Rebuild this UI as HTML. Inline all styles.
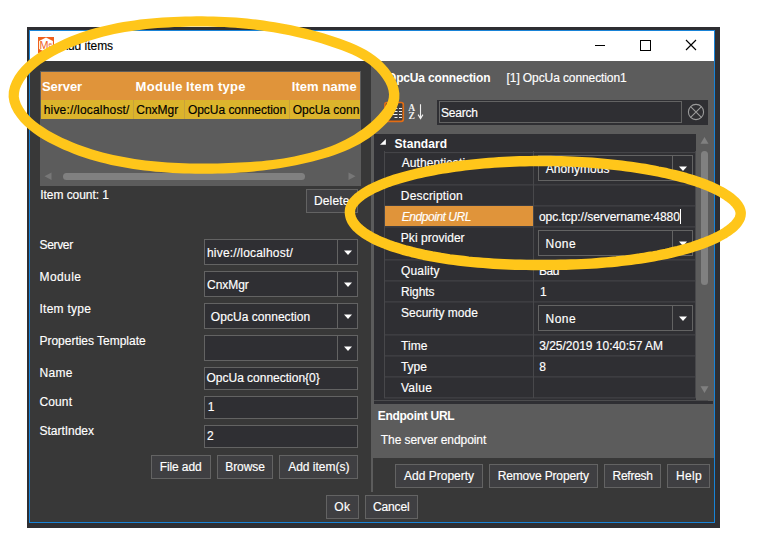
<!DOCTYPE html>
<html><head><meta charset="utf-8"><title>Add items</title>
<style>
html,body{margin:0;padding:0;background:#fff;}
body{width:758px;height:537px;position:relative;overflow:hidden;font-family:"Liberation Sans",sans-serif;font-size:12px;color:#fff;}
.a{position:absolute;box-sizing:border-box;}
.t{position:absolute;white-space:nowrap;line-height:16px;height:16px;-webkit-text-stroke:0.16px currentColor;}
.btn{position:absolute;box-sizing:border-box;background:#3f3f42;border:1px solid #636363;}
.box{position:absolute;box-sizing:border-box;border:1px solid #636363;}
</style></head><body>
<!-- window frame -->
<div class="a" style="left:27px;top:27px;width:693px;height:500.5px;background:#2e2e32;"></div>
<div class="a" style="left:29px;top:30px;width:686px;height:493px;background:#1883d7;"></div>
<div class="a" style="left:30px;top:31px;width:684px;height:30px;background:#fff;"></div>
<div class="a" style="left:30px;top:61px;width:684px;height:461px;background:#383838;"></div>

<!-- title bar -->
<svg class="a" style="left:38px;top:37px" width="16" height="16" viewBox="0 0 16 16"><rect width="16" height="16" fill="#f0601c"/><path d="M8 0.5 L14.9 3.9 V12.1 L8 15.5 L1.1 12.1 V3.9 Z" fill="#fff"/><text x="1.6" y="11.6" font-family="Liberation Sans, sans-serif" font-size="10.8" fill="#f0601c">M</text><text x="10.4" y="9.6" font-family="Liberation Sans, sans-serif" font-size="6.5" fill="#f0601c">e</text></svg>
<svg class="a" style="left:575px;top:30px" width="139" height="31" viewBox="0 0 139 31"><g stroke="#000" stroke-width="1" fill="none"><path d="M20 15.5 H30"/><rect x="65.5" y="10.5" width="10" height="10"/><path d="M111 10 L121 20 M121 10 L111 20" stroke-width="1.15"/></g></svg>

<!-- left table -->
<div class="a" style="left:40px;top:71px;width:321px;height:115px;background:#5c5c5c;"></div>
<div class="a" style="left:41px;top:72px;width:319px;height:28px;background:#e0943a;"></div>
<div class="a" style="left:41px;top:100px;width:319px;height:19px;background:#dcb42c;"></div>
<div class="a" style="left:133px;top:100px;width:1px;height:19px;background:#c9a23a;"></div>
<div class="a" style="left:184px;top:100px;width:1px;height:19px;background:#c9a23a;"></div>
<div class="a" style="left:289px;top:100px;width:1px;height:19px;background:#c9a23a;"></div>
<div class="a" style="left:63px;top:173px;width:241.5px;height:7px;border-radius:3.5px;background:#808080;"></div>
<svg class="a" style="left:43px;top:171px" width="10" height="10" viewBox="0 0 10 10"><path d="M8.5 1.5 V9 L1.5 5.2 Z" fill="#777"/></svg>
<svg class="a" style="left:347px;top:171px" width="10" height="10" viewBox="0 0 10 10"><path d="M1.5 1.5 V9 L8.5 5.2 Z" fill="#777"/></svg>
<div class="btn" style="left:306px;top:189px;width:52px;height:24px;"></div>

<!-- left form -->
<div class="box" style="left:204px;top:239px;width:154px;height:26px;background:#2f2f33"></div><div class="a" style="left:337px;top:240px;width:1px;height:24px;background:#636363"></div><svg class="a" style="left:343px;top:250px" width="10" height="6" viewBox="0 0 10 6"><path d="M1 0.5 H9 L5 5 Z" fill="#fff"/></svg>
<div class="box" style="left:204px;top:271px;width:154px;height:26px;background:#2f2f33"></div><div class="a" style="left:337px;top:272px;width:1px;height:24px;background:#636363"></div><svg class="a" style="left:343px;top:282px" width="10" height="6" viewBox="0 0 10 6"><path d="M1 0.5 H9 L5 5 Z" fill="#fff"/></svg>
<div class="box" style="left:204px;top:303px;width:154px;height:26px;background:#2f2f33"></div><div class="a" style="left:337px;top:304px;width:1px;height:24px;background:#636363"></div><svg class="a" style="left:343px;top:314px" width="10" height="6" viewBox="0 0 10 6"><path d="M1 0.5 H9 L5 5 Z" fill="#fff"/></svg>
<div class="box" style="left:204px;top:335px;width:154px;height:26px;background:#2f2f33"></div><div class="a" style="left:337px;top:336px;width:1px;height:24px;background:#636363"></div><svg class="a" style="left:343px;top:346px" width="10" height="6" viewBox="0 0 10 6"><path d="M1 0.5 H9 L5 5 Z" fill="#fff"/></svg>
<div class="box" style="left:204px;top:367px;width:154px;height:23px;background:#2f2f33"></div>
<div class="box" style="left:204px;top:396px;width:154px;height:23px;background:#2f2f33"></div>
<div class="box" style="left:204px;top:425px;width:154px;height:23px;background:#2f2f33"></div>
<div class="btn" style="left:151px;top:455px;width:60px;height:24px;"></div>
<div class="btn" style="left:217px;top:455px;width:56px;height:24px;"></div>
<div class="btn" style="left:279px;top:455px;width:79px;height:24px;"></div>
<div class="btn" style="left:326px;top:495px;width:33px;height:24px;"></div>
<div class="btn" style="left:365px;top:495px;width:53px;height:24px;"></div>

<!-- splitter + right panel -->
<div class="a" style="left:371.3px;top:61px;width:342.7px;height:397px;background:#5c5c5c;"></div>
<div class="a" style="left:371.3px;top:458px;width:1.7px;height:33.6px;background:#5c5c5c;"></div>

<!-- toolbar -->
<div class="a" style="left:437px;top:99.5px;width:271px;height:25px;background:#2f2f33;"></div>
<div class="a" style="left:439px;top:101px;width:243px;height:22px;border:1px solid #636363;"></div>
<svg class="a" style="left:686px;top:102px" width="20" height="20" viewBox="0 0 20 20"><circle cx="10" cy="10" r="7.6" fill="none" stroke="#9a9a9a" stroke-width="1.1"/><path d="M4.6 4.6 L15.4 15.4 M15.4 4.6 L4.6 15.4" stroke="#9a9a9a" stroke-width="1.1"/></svg>
<svg class="a" style="left:384px;top:101px" width="42" height="22" viewBox="0 0 42 22"><rect x="0.9" y="1.5" width="18.4" height="18.8" rx="2" fill="#3e3e40" stroke="#e26d14" stroke-width="1.7"/><rect x="3.5" y="4" width="4" height="3.5" fill="none" stroke="#e6e6e6" stroke-width="0.9"/><g stroke="#f0f0f0" stroke-width="1"><path d="M10.5 7.5 H13.5 M15 7.5 H18 M10.5 10.5 H13.5 M15 10.5 H18 M7 13.5 H13.5 M15 13.5 H18 M10.5 16.5 H13.5 M15 16.5 H18 M4 16.5 H7"/></g><text x="24.2" y="9.6" font-family="Liberation Serif, serif" font-weight="bold" font-size="9.6" fill="#f0f0f0">A</text><text x="24.4" y="17.9" font-family="Liberation Serif, serif" font-weight="bold" font-size="9.6" fill="#f0f0f0">Z</text><path d="M36.5 3.2 V17 M34.1 13.6 L36.5 17.6 L38.9 13.6" stroke="#f0f0f0" fill="none" stroke-width="1.1"/></svg>

<!-- grid -->
<div class="a" style="left:374.3px;top:134px;width:321.7px;height:265.8px;background:#2f2f33;"></div>
<svg class="a" style="left:379px;top:138px" width="8" height="8" viewBox="0 0 8 8"><path d="M6.9 0.9 V6.8 H1 Z" fill="#fff"/></svg>
<svg class="a" style="left:384px;top:150px" width="312" height="250" viewBox="0 0 312 250"><rect x="0" y="2.10" width="312" height="1" fill="#48484b"/><rect x="0" y="34.40" width="312" height="1" fill="#48484b"/><rect x="0" y="55.40" width="312" height="1" fill="#48484b"/><rect x="0" y="76.40" width="312" height="1" fill="#48484b"/><rect x="0" y="109.40" width="312" height="1" fill="#48484b"/><rect x="0" y="130.40" width="312" height="1" fill="#48484b"/><rect x="0" y="151.40" width="312" height="1" fill="#48484b"/><rect x="0" y="184.40" width="312" height="1" fill="#48484b"/><rect x="0" y="205.40" width="312" height="1" fill="#48484b"/><rect x="0" y="226.40" width="312" height="1" fill="#48484b"/><rect x="0" y="247.40" width="312" height="1" fill="#48484b"/></svg>
<div class="a" style="left:384px;top:206px;width:149px;height:20px;background:#e0943a;"></div>
<div class="a" style="left:384px;top:151px;width:1px;height:247px;background:#48484b"></div>
<div class="a" style="left:533px;top:151px;width:1px;height:247px;background:#48484b"></div>
<div class="a" style="left:695px;top:151px;width:1px;height:247px;background:#48484b"></div>
<div class="box" style="left:538px;top:155px;width:155px;height:26px;background:#2f2f33"></div><div class="a" style="left:672px;top:156px;width:1px;height:24px;background:#636363"></div><svg class="a" style="left:678px;top:166px" width="10" height="6" viewBox="0 0 10 6"><path d="M1 0.5 H9 L5 5 Z" fill="#fff"/></svg>
<div class="box" style="left:538px;top:230px;width:155px;height:26px;background:#2f2f33"></div><div class="a" style="left:672px;top:231px;width:1px;height:24px;background:#636363"></div><svg class="a" style="left:678px;top:241px" width="10" height="6" viewBox="0 0 10 6"><path d="M1 0.5 H9 L5 5 Z" fill="#fff"/></svg>
<div class="box" style="left:538px;top:305px;width:155px;height:26px;background:#2f2f33"></div><div class="a" style="left:672px;top:306px;width:1px;height:24px;background:#636363"></div><svg class="a" style="left:678px;top:316px" width="10" height="6" viewBox="0 0 10 6"><path d="M1 0.5 H9 L5 5 Z" fill="#fff"/></svg>
<div class="a" style="left:680px;top:209px;width:1px;height:15px;background:#fff;"></div>

<!-- grid scrollbar -->
<div class="a" style="left:701px;top:151px;width:7px;height:133.5px;border-radius:3.5px;background:#808080;"></div>
<svg class="a" style="left:699px;top:136px" width="11" height="9" viewBox="0 0 11 9"><path d="M1.5 7.8 H9.5 L5.5 1 Z" fill="#808080"/></svg>
<svg class="a" style="left:699px;top:385px" width="11" height="9" viewBox="0 0 11 9"><path d="M1.5 1.2 H9.5 L5.5 8 Z" fill="#808080"/></svg>

<!-- description splitter -->
<div class="a" style="left:374.3px;top:399.7px;width:333.7px;height:1px;background:#4c4c4e;"></div>
<div class="a" style="left:374.3px;top:400.9px;width:338.7px;height:2.9px;background:#2f2f33;"></div>

<!-- right buttons -->
<div class="btn" style="left:395px;top:464px;width:88px;height:24px;"></div>
<div class="btn" style="left:489px;top:464px;width:109px;height:24px;"></div>
<div class="btn" style="left:604px;top:464px;width:57px;height:24px;"></div>
<div class="btn" style="left:667px;top:464px;width:43px;height:24px;"></div>

<!-- texts -->
<span class="t" style="left:60.0px;top:38.2px;font-size:12px;letter-spacing:-0.03px;color:#000;">Add items</span>
<span class="t" style="left:41.9px;top:78.5px;font-size:13px;font-weight:bold;-webkit-text-stroke:0;letter-spacing:-0.04px;">Server</span>
<span class="t" style="left:135.6px;top:78.5px;font-size:13px;font-weight:bold;-webkit-text-stroke:0;letter-spacing:0.28px;">Module</span>
<span class="t" style="left:186.1px;top:78.5px;font-size:13px;font-weight:bold;-webkit-text-stroke:0;letter-spacing:0.29px;">Item type</span>
<span class="t" style="left:291.7px;top:78.5px;font-size:13px;font-weight:bold;-webkit-text-stroke:0;letter-spacing:0.08px;">Item name</span>
<span class="t" style="left:43.7px;top:102.3px;font-size:12px;letter-spacing:0.19px;color:#000;">hive://localhost/</span>
<span class="t" style="left:136.3px;top:102.3px;font-size:12px;letter-spacing:-0.02px;color:#000;">CnxMgr</span>
<span class="t" style="left:187.9px;top:102.3px;font-size:12px;letter-spacing:-0.03px;color:#000;">OpcUa connection</span>
<span class="t" style="left:292.7px;top:102.3px;font-size:12px;color:#000;width:67.3px;overflow:hidden;">OpcUa connection1</span>
<span class="t" style="left:40.3px;top:187.0px;font-size:12px;letter-spacing:-0.06px;">Item count: 1</span>
<span class="t" style="left:313.9px;top:192.5px;font-size:12px;letter-spacing:0.18px;">Delete</span>
<span class="t" style="left:39.5px;top:237.0px;font-size:12px;letter-spacing:-0.34px;">Server</span>
<span class="t" style="left:39.5px;top:269.0px;font-size:12px;letter-spacing:0.42px;">Module</span>
<span class="t" style="left:39.5px;top:301.0px;font-size:12px;letter-spacing:0.25px;">Item type</span>
<span class="t" style="left:39.5px;top:333.0px;font-size:12px;letter-spacing:-0.02px;">Properties Template</span>
<span class="t" style="left:39.5px;top:365.0px;font-size:12px;letter-spacing:0.30px;">Name</span>
<span class="t" style="left:39.5px;top:394.0px;font-size:12px;letter-spacing:0.12px;">Count</span>
<span class="t" style="left:39.5px;top:423.0px;font-size:12px;letter-spacing:-0.02px;">StartIndex</span>
<span class="t" style="left:207.0px;top:245.0px;font-size:12px;letter-spacing:0.19px;">hive://localhost/</span>
<span class="t" style="left:207.0px;top:277.0px;font-size:12px;letter-spacing:-0.04px;">CnxMgr</span>
<span class="t" style="left:210.8px;top:309.0px;font-size:12px;letter-spacing:0.04px;">OpcUa connection</span>
<span class="t" style="left:206.5px;top:370.0px;font-size:12px;letter-spacing:-0.01px;">OpcUa connection{0}</span>
<span class="t" style="left:207.7px;top:399.0px;font-size:12px;">1</span>
<span class="t" style="left:207.0px;top:428.0px;font-size:12px;">2</span>
<span class="t" style="left:159.7px;top:459.0px;font-size:12px;letter-spacing:-0.10px;">File add</span>
<span class="t" style="left:225.3px;top:459.0px;font-size:12px;letter-spacing:-0.10px;">Browse</span>
<span class="t" style="left:288.2px;top:459.0px;font-size:12px;">Add item(s)</span>
<span class="t" style="left:334.3px;top:499.0px;font-size:12px;letter-spacing:0.40px;">Ok</span>
<span class="t" style="left:373.1px;top:499.0px;font-size:12px;letter-spacing:-0.18px;">Cancel</span>
<span class="t" style="left:387.0px;top:70.0px;font-size:12px;font-weight:bold;-webkit-text-stroke:0;letter-spacing:-0.17px;">OpcUa connection</span>
<span class="t" style="left:506.6px;top:70.0px;font-size:12px;letter-spacing:-0.10px;">[1] OpcUa connection1</span>
<span class="t" style="left:441.0px;top:105.0px;font-size:12px;letter-spacing:-0.22px;">Search</span>
<span class="t" style="left:394.5px;top:136.0px;font-size:12px;font-weight:bold;-webkit-text-stroke:0;letter-spacing:0.07px;">Standard</span>
<span class="t" style="left:401.8px;top:155.0px;font-size:12px;letter-spacing:0.05px;">Authentication</span>
<span class="t" style="left:400.8px;top:188.0px;font-size:12px;letter-spacing:0.19px;">Description</span>
<span class="t" style="left:401.8px;top:209.0px;font-size:12px;font-style:italic;letter-spacing:-0.46px;">Endpoint URL</span>
<span class="t" style="left:400.8px;top:230.0px;font-size:12px;letter-spacing:0.04px;">Pki provider</span>
<span class="t" style="left:400.9px;top:263.0px;font-size:12px;letter-spacing:0.20px;">Quality</span>
<span class="t" style="left:400.9px;top:284.0px;font-size:12px;letter-spacing:-0.06px;">Rights</span>
<span class="t" style="left:400.9px;top:305.0px;font-size:12px;letter-spacing:0.03px;">Security mode</span>
<span class="t" style="left:401.0px;top:338.0px;font-size:12px;letter-spacing:0.10px;">Time</span>
<span class="t" style="left:401.0px;top:359.0px;font-size:12px;letter-spacing:-0.07px;">Type</span>
<span class="t" style="left:401.0px;top:380.0px;font-size:12px;letter-spacing:0.25px;">Value</span>
<span class="t" style="left:545.8px;top:161.0px;font-size:12px;letter-spacing:0.03px;">Anonymous</span>
<span class="t" style="left:539.0px;top:209.0px;font-size:12px;letter-spacing:-0.05px;">opc.tcp://servername:4880</span>
<span class="t" style="left:545.5px;top:236.0px;font-size:12px;letter-spacing:0.50px;">None</span>
<span class="t" style="left:539.0px;top:263.0px;font-size:12px;letter-spacing:-0.50px;">Bad</span>
<span class="t" style="left:540.0px;top:284.0px;font-size:12px;">1</span>
<span class="t" style="left:545.5px;top:311.0px;font-size:12px;letter-spacing:0.50px;">None</span>
<span class="t" style="left:539.2px;top:338.0px;font-size:12px;letter-spacing:-0.01px;">3/25/2019 10:40:57 AM</span>
<span class="t" style="left:539.3px;top:359.0px;font-size:12px;">8</span>
<span class="t" style="left:377.7px;top:408.0px;font-size:12px;font-weight:bold;-webkit-text-stroke:0;letter-spacing:-0.27px;">Endpoint URL</span>
<span class="t" style="left:380.8px;top:432.0px;font-size:12px;letter-spacing:-0.07px;">The server endpoint</span>
<span class="t" style="left:404.1px;top:468.0px;font-size:12px;letter-spacing:-0.01px;">Add Property</span>
<span class="t" style="left:497.7px;top:468.0px;font-size:12px;letter-spacing:-0.15px;">Remove Property</span>
<span class="t" style="left:612.5px;top:468.0px;font-size:12px;letter-spacing:-0.25px;">Refresh</span>
<span class="t" style="left:675.9px;top:468.0px;font-size:12px;letter-spacing:0.33px;">Help</span>

<!-- yellow ellipses -->
<svg class="a" style="left:0;top:0" width="758" height="537" viewBox="0 0 758 537">
<path fill="#ffc61a" fill-rule="evenodd" d="M8.6 97.0 L8.8 91.5 L10.1 86.1 L12.1 80.9 L14.9 75.8 L18.1 71.2 L21.7 66.9 L25.7 62.9 L30.0 59.2 L34.6 55.8 L39.3 52.6 L44.1 49.6 L49.1 46.8 L54.0 44.2 L59.1 41.7 L64.2 39.3 L69.3 37.1 L74.5 35.0 L79.8 33.1 L85.1 31.3 L90.4 29.6 L95.8 28.1 L101.2 26.7 L106.7 25.4 L112.2 24.2 L117.7 23.1 L123.2 22.1 L128.8 21.2 L134.3 20.4 L140.0 19.6 L145.6 19.0 L151.2 18.4 L156.8 18.0 L162.5 17.5 L168.1 17.2 L173.8 16.9 L179.5 16.7 L185.1 16.5 L190.8 16.4 L196.4 16.3 L202.1 16.3 L207.7 16.4 L213.4 16.5 L219.0 16.7 L224.6 16.9 L230.2 17.3 L235.9 17.6 L241.5 18.1 L247.1 18.6 L252.7 19.2 L258.2 19.8 L263.8 20.6 L269.4 21.4 L274.9 22.2 L280.4 23.2 L286.0 24.2 L291.5 25.3 L296.9 26.5 L302.4 27.7 L307.9 29.1 L313.3 30.5 L318.7 32.0 L324.1 33.6 L329.5 35.2 L334.9 37.0 L340.2 38.8 L345.5 40.7 L350.8 42.8 L356.0 45.0 L361.1 47.4 L366.0 50.1 L370.8 53.0 L375.4 56.2 L379.8 59.7 L383.9 63.7 L387.8 68.0 L391.3 72.7 L394.3 77.7 L396.8 82.8 L398.5 88.1 L399.4 93.4 L399.3 98.7 L398.2 103.9 L396.3 108.9 L393.7 113.8 L390.4 118.4 L386.7 122.9 L382.6 127.1 L378.2 131.0 L373.8 134.6 L369.2 138.0 L364.4 141.1 L359.6 144.0 L354.6 146.6 L349.6 149.0 L344.4 151.3 L339.2 153.3 L333.9 155.2 L328.6 157.0 L323.2 158.6 L317.8 160.1 L312.4 161.5 L306.9 162.8 L301.4 164.0 L295.9 165.2 L290.4 166.2 L284.9 167.2 L279.3 168.2 L273.8 169.0 L268.2 169.8 L262.7 170.5 L257.1 171.1 L251.5 171.7 L245.9 172.2 L240.3 172.6 L234.6 172.9 L229.0 173.2 L223.4 173.5 L217.7 173.6 L212.1 173.7 L206.4 173.8 L200.8 173.8 L195.1 173.7 L189.5 173.6 L183.8 173.4 L178.2 173.2 L172.5 172.9 L166.9 172.6 L161.2 172.1 L155.6 171.7 L150.0 171.1 L144.4 170.5 L138.8 169.8 L133.2 169.0 L127.6 168.1 L122.1 167.1 L116.6 166.1 L111.1 164.9 L105.6 163.6 L100.2 162.3 L94.8 160.8 L89.4 159.2 L84.1 157.5 L78.8 155.7 L73.6 153.7 L68.4 151.6 L63.2 149.4 L58.1 147.1 L53.0 144.6 L48.0 142.0 L43.1 139.2 L38.2 136.2 L33.6 133.0 L29.1 129.5 L24.8 125.8 L20.8 121.7 L17.2 117.3 L13.9 112.6 L11.3 107.6 L9.5 102.3Z M18.8 96.4 L19.0 92.9 L19.8 89.1 L21.4 85.2 L23.6 81.2 L26.2 77.4 L29.2 73.8 L32.7 70.4 L36.4 67.2 L40.5 64.1 L44.8 61.2 L49.3 58.4 L54.0 55.7 L58.7 53.2 L63.5 50.9 L68.3 48.6 L73.2 46.5 L78.2 44.6 L83.2 42.7 L88.3 41.0 L93.4 39.4 L98.5 37.9 L103.7 36.6 L109.0 35.3 L114.2 34.1 L119.6 33.1 L124.9 32.1 L130.3 31.2 L135.7 30.5 L141.2 29.8 L146.6 29.1 L152.1 28.6 L157.6 28.1 L163.2 27.7 L168.7 27.4 L174.3 27.1 L179.8 26.9 L185.4 26.7 L190.9 26.6 L196.5 26.5 L202.0 26.5 L207.6 26.6 L213.1 26.7 L218.6 26.9 L224.1 27.1 L229.6 27.4 L235.1 27.8 L240.6 28.3 L246.1 28.8 L251.5 29.3 L257.0 30.0 L262.4 30.7 L267.8 31.5 L273.3 32.3 L278.6 33.2 L284.0 34.2 L289.4 35.3 L294.7 36.4 L300.1 37.7 L305.4 39.0 L310.7 40.3 L315.9 41.8 L321.2 43.3 L326.4 45.0 L331.6 46.7 L336.8 48.4 L341.9 50.3 L346.9 52.2 L351.8 54.3 L356.5 56.5 L361.0 58.9 L365.2 61.5 L369.3 64.3 L373.1 67.4 L376.6 70.8 L379.9 74.4 L382.9 78.4 L385.4 82.5 L387.3 86.6 L388.5 90.5 L389.0 94.2 L388.8 97.6 L388.0 100.9 L386.4 104.4 L384.3 108.0 L381.5 111.6 L378.3 115.3 L374.7 118.9 L370.9 122.4 L366.9 125.7 L362.8 128.9 L358.6 131.8 L354.3 134.7 L349.9 137.3 L345.3 139.8 L340.6 142.1 L335.8 144.3 L330.9 146.3 L325.8 148.1 L320.7 149.8 L315.5 151.3 L310.2 152.7 L304.9 154.1 L299.5 155.3 L294.2 156.4 L288.8 157.5 L283.4 158.4 L277.9 159.3 L272.5 160.0 L267.0 160.6 L261.6 161.2 L256.1 161.6 L250.6 162.0 L245.1 162.3 L239.6 162.6 L234.1 162.8 L228.5 163.0 L223.0 163.3 L217.5 163.4 L212.0 163.5 L206.4 163.6 L200.9 163.6 L195.3 163.5 L189.8 163.4 L184.2 163.2 L178.6 163.0 L173.1 162.7 L167.6 162.4 L162.0 162.0 L156.5 161.5 L151.0 161.0 L145.6 160.4 L140.1 159.7 L134.7 158.9 L129.3 158.0 L123.9 157.1 L118.6 156.1 L113.3 154.9 L108.0 153.7 L102.8 152.4 L97.6 151.0 L92.4 149.5 L87.3 147.8 L82.2 146.1 L77.2 144.2 L72.3 142.2 L67.3 140.1 L62.5 137.9 L57.6 135.5 L52.9 133.0 L48.3 130.4 L43.8 127.6 L39.6 124.7 L35.6 121.7 L31.8 118.4 L28.4 114.9 L25.3 111.2 L22.7 107.3 L20.7 103.5 L19.4 99.8Z"/>
<path fill="none" stroke="#ffc61a" stroke-width="10.4" stroke-linejoin="round" d="M740.7 213.5 L740.6 214.6 L740.5 215.6 L740.2 216.7 L739.9 217.8 L739.4 218.9 L738.8 220.0 L738.1 221.2 L737.3 222.4 L736.3 223.6 L735.2 224.9 L734.0 226.1 L732.6 227.4 L731.0 228.7 L729.4 229.9 L727.6 231.2 L725.6 232.5 L723.6 233.8 L721.4 235.0 L719.0 236.3 L716.6 237.5 L714.0 238.8 L711.3 240.0 L708.5 241.2 L705.5 242.4 L702.5 243.5 L699.3 244.7 L696.0 245.8 L692.6 246.9 L689.1 247.9 L685.5 249.0 L681.8 250.0 L678.0 251.0 L674.1 251.9 L670.2 252.9 L666.1 253.8 L661.9 254.6 L657.7 255.5 L653.4 256.3 L649.0 257.0 L644.5 257.8 L640.0 258.5 L635.4 259.1 L630.7 259.8 L626.0 260.4 L621.2 260.9 L616.4 261.5 L611.5 262.0 L606.5 262.4 L601.6 262.8 L596.6 263.2 L591.5 263.6 L586.4 263.9 L581.3 264.1 L576.2 264.4 L571.0 264.5 L565.8 264.7 L560.6 264.8 L555.4 264.9 L550.2 264.9 L544.9 264.9 L538.2 265.0 L532.1 265.0 L526.3 264.9 L520.6 264.8 L515.0 264.7 L509.5 264.5 L504.1 264.3 L498.8 264.0 L493.5 263.7 L488.3 263.3 L483.2 262.9 L478.2 262.5 L473.2 262.1 L468.3 261.6 L463.5 261.0 L458.8 260.5 L454.1 259.9 L449.5 259.3 L445.0 258.6 L440.6 257.9 L436.3 257.1 L432.0 256.4 L427.8 255.6 L423.8 254.8 L419.8 253.9 L415.9 253.0 L412.1 252.1 L408.4 251.1 L404.7 250.2 L401.2 249.1 L397.8 248.1 L394.5 247.1 L391.3 246.0 L388.2 244.9 L385.3 243.7 L382.4 242.6 L379.7 241.4 L377.0 240.2 L374.5 239.0 L372.1 237.8 L369.8 236.5 L367.7 235.2 L365.6 234.0 L363.7 232.7 L362.0 231.4 L360.3 230.1 L358.8 228.8 L357.4 227.5 L356.1 226.2 L355.0 224.9 L354.0 223.6 L353.1 222.3 L352.3 221.0 L351.7 219.7 L351.1 218.4 L350.7 217.1 L350.3 215.8 L350.1 214.5 L349.9 213.1 L349.9 211.5 L350.0 210.5 L350.1 209.5 L350.3 208.4 L350.7 207.4 L351.2 206.3 L351.7 205.2 L352.4 204.0 L353.3 202.8 L354.3 201.6 L355.4 200.4 L356.6 199.2 L358.0 197.9 L359.5 196.7 L361.2 195.4 L363.0 194.1 L364.9 192.9 L367.0 191.6 L369.2 190.4 L371.5 189.1 L374.0 187.9 L376.6 186.7 L379.3 185.5 L382.1 184.3 L385.0 183.2 L388.1 182.0 L391.3 180.9 L394.6 179.8 L398.0 178.7 L401.5 177.7 L405.1 176.7 L408.8 175.7 L412.6 174.7 L416.4 173.8 L420.4 172.9 L424.5 172.0 L428.7 171.1 L432.9 170.3 L437.2 169.5 L441.6 168.7 L446.1 168.0 L450.6 167.3 L455.2 166.7 L459.9 166.0 L464.6 165.4 L469.4 164.9 L474.2 164.4 L479.1 163.9 L484.0 163.4 L489.0 163.0 L494.0 162.6 L499.1 162.3 L504.2 162.0 L509.3 161.8 L514.4 161.5 L519.6 161.3 L524.8 161.2 L529.9 161.1 L535.1 161.0 L540.4 161.0 L545.6 161.0 L550.8 161.0 L556.0 161.1 L561.2 161.3 L566.4 161.4 L571.6 161.6 L576.7 161.9 L581.8 162.1 L587.0 162.4 L592.0 162.8 L597.1 163.2 L602.1 163.6 L607.1 164.1 L612.0 164.6 L616.9 165.1 L621.7 165.7 L626.5 166.3 L631.2 166.9 L635.9 167.6 L640.5 168.3 L645.0 169.0 L649.5 169.8 L653.8 170.6 L658.1 171.5 L662.4 172.3 L666.5 173.2 L670.6 174.2 L674.6 175.1 L678.4 176.1 L682.2 177.1 L685.9 178.1 L689.5 179.2 L693.0 180.3 L696.4 181.4 L699.6 182.5 L702.8 183.7 L705.9 184.9 L708.8 186.0 L711.6 187.3 L714.3 188.5 L716.9 189.7 L719.3 191.0 L721.6 192.2 L723.8 193.5 L725.9 194.8 L727.8 196.1 L729.6 197.3 L731.2 198.6 L732.7 199.9 L734.1 201.1 L735.3 202.4 L736.4 203.6 L737.4 204.8 L738.2 206.0 L738.9 207.2 L739.5 208.3 L739.9 209.4 L740.3 210.5 L740.5 211.5 L740.7 212.5Z"/>
</svg>
</body></html>
